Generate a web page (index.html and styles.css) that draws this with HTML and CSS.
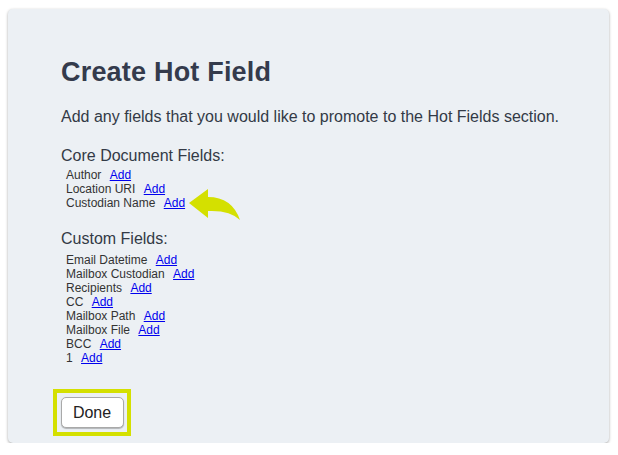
FILE: index.html
```html
<!DOCTYPE html>
<html>
<head>
<meta charset="utf-8">
<link rel="stylesheet" href="styles.css">
</head>
<body>
<div class="card">
  <h1 class="title">Create Hot Field</h1>
  <p class="intro">Add any fields that you would like to promote to the Hot Fields section.</p>
  <h2 class="section">Core Document Fields:</h2>
  <ul class="fields">
    <li>Author <a href="#">Add</a></li>
    <li>Location URI <a href="#">Add</a></li>
    <li>Custodian Name <a href="#">Add</a></li>
  </ul>
  <h2 class="section section-custom">Custom Fields:</h2>
  <ul class="fields fields-custom">
    <li>Email Datetime <a href="#">Add</a></li>
    <li>Mailbox Custodian <a href="#">Add</a></li>
    <li>Recipients <a href="#">Add</a></li>
    <li>CC <a href="#">Add</a></li>
    <li>Mailbox Path <a href="#">Add</a></li>
    <li>Mailbox File <a href="#">Add</a></li>
    <li>BCC <a href="#">Add</a></li>
    <li>1 <a href="#">Add</a></li>
  </ul>
  <div class="highlight"><button class="done">Done</button></div>
  <svg class="arrow" width="60" height="40" viewBox="0 0 60 40">
    <path d="M3 17 L22 3 L22 11 Q46 11 54 34 Q44 24 22 25 L22 32 Z" fill="#d4e000"/>
  </svg>
</div>
</body>
</html>
```
FILE: styles.css
```css
html, body {
  margin: 0;
  padding: 0;
  background: #ffffff;
}
body {
  font-family: "Liberation Sans", Arial, sans-serif;
  color: #333;
}
.card {
  position: relative;
  box-sizing: border-box;
  margin: 9px 9px 0 8px;
  width: 601px;
  height: 434px;
  background: #ecf0f4;
  border-radius: 5px;
  box-shadow: 0 1px 3px rgba(0,0,0,0.35);
  padding: 48px 0 0 53px;
}
.title {
  margin: 0;
  font-size: 27px;
  line-height: 30px;
  font-weight: bold;
  letter-spacing: 0.2px;
  color: #343b4c;
}
.intro {
  margin: 20px 0 0;
  font-size: 16px;
  line-height: 20px;
  color: #333a46;
}
.section {
  margin: 19px 0 0;
  font-size: 16px;
  line-height: 20px;
  font-weight: normal;
  color: #333a46;
}
.fields {
  list-style: none;
  margin: 2px 0 0;
  padding: 0 0 0 5px;
  font-size: 12px;
  line-height: 14px;
  color: #333;
}
.fields a {
  color: #0000ee;
  margin-left: 5px;
}
.section-custom {
  margin-top: 19px;
}
.fields-custom {
  margin-top: 4px;
}
.highlight {
  margin: 24px 0 0 -8px;
  width: 70px;
  height: 39px;
  border: 4px solid #d4e000;
  box-sizing: content-box;
  display: flex;
  align-items: center;
  justify-content: center;
}
.done {
  width: 63px;
  height: 31px;
  background: #fff;
  border: 1px solid #a9a9a9;
  border-radius: 5px;
  box-shadow: 0 1px 1px rgba(0,0,0,0.25);
  font-family: "Liberation Sans", Arial, sans-serif;
  font-size: 16px;
  color: #222;
  padding: 0;
}
.arrow {
  position: absolute;
  left: 178px;
  top: 177px;
}
```
